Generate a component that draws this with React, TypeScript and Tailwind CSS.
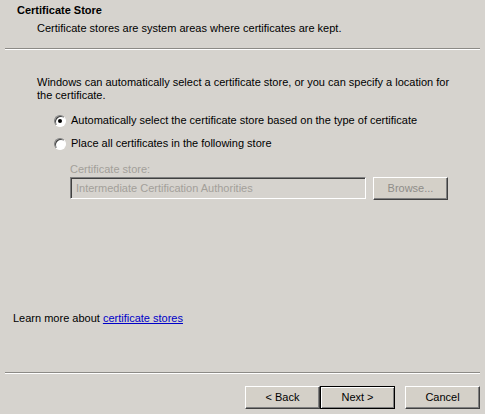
import type { ReactNode } from "react";

const font = { fontFamily: "'Liberation Sans', Arial, sans-serif" };

function Radio({ checked, children }: { checked?: boolean; children: ReactNode }) {
	return (
		<label className="flex h-[13px] items-center gap-[5px] text-black">
			<span className="relative flex size-[12px] items-center justify-center rounded-full border border-[#808080] border-b-white border-r-white bg-white shadow-[inset_1px_1px_0_#404040]">
				{checked && <span className="size-[4px] rounded-full bg-black" />}
			</span>
			{children}
		</label>
	);
}

function WinButton({ label, primary, disabled }: { label: string; primary?: boolean; disabled?: boolean }) {
	return (
		<button
			className={
				"flex h-[23px] w-[75px] items-center justify-center bg-[#d4d0c8] text-[11px] " +
				(primary
					? "border border-black shadow-[inset_1px_1px_0_#fff,inset_-1px_-1px_0_#808080]"
					: "border border-white border-b-[#404040] border-r-[#404040] shadow-[inset_-1px_-1px_0_#808080]") +
				(disabled ? " text-[#8f8d88]" : " text-black")
			}
		>
			{label}
		</button>
	);
}

function Separator() {
	return <div className="mx-[5px] h-[2px] border-t border-[#8c8a86] border-b border-b-white" />;
}

export default function App() {
	return (
		<div style={font} className="flex h-[414px] w-[485px] flex-col bg-[#d6d3ce] text-[11px] leading-[13px] text-black">
			<div className="pt-[4px]">
				<div className="pl-[17px] font-bold">Certificate Store</div>
				<div className="mt-[5px] pl-[37px]">Certificate stores are system areas where certificates are kept.</div>
			</div>
			<div className="mt-[13px]">
				<Separator />
			</div>

			<div className="flex flex-col pl-[37px] pt-[26px]">
				<p className="w-[420px]">
					Windows can automatically select a certificate store, or you can specify a location for the certificate.
				</p>
				<div className="mt-[12px] flex flex-col gap-[10px] pl-[17px]">
					<Radio checked>Automatically select the certificate store based on the type of certificate</Radio>
					<Radio>Place all certificates in the following store</Radio>
				</div>
				<div className="mt-[13px] pl-[33px]">
					<div className="text-[#a3a09a]">Certificate store:</div>
					<div className="mt-[1px] flex gap-[7px]">
						<div className="flex h-[22px] w-[296px] items-center border border-[#808080] border-b-white border-r-white pl-[5px] text-[#a3a09a] shadow-[inset_1px_1px_0_#404040]">
							Intermediate Certification Authorities
						</div>
						<WinButton label="Browse..." disabled />
					</div>
				</div>
			</div>

			<div className="mt-auto pl-[13px]">
				Learn more about <span className="text-[#0000c8] underline">certificate stores</span>
			</div>
			<div className="mt-[47px]">
				<Separator />
			</div>
			<div className="flex justify-end pr-[5px] pt-[12px]">
				<WinButton label="< Back" />
				<WinButton label="Next >" primary />
				<div className="ml-[10px]">
					<WinButton label="Cancel" />
				</div>
			</div>
			<div className="h-[5px]" />
		</div>
	);
}
